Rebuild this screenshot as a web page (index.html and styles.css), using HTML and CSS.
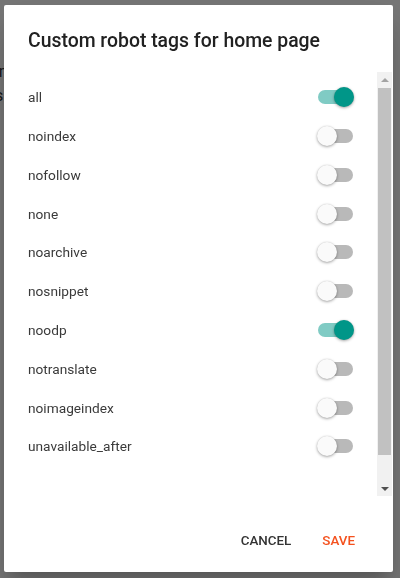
FILE: index.html
```html
<!DOCTYPE html>
<html lang="en">
<head>
<meta charset="utf-8">
<title>Custom robot tags</title>
<link rel="stylesheet" href="styles.css">
</head>
<body>
<div class="page">
  <p class="page-line line-1">Enable custom robots header tags: on</p>
  <p class="page-line line-2">Custom robots header tags for pages</p>
</div>
<div class="overlay">
  <div class="dialog">
    <h2 class="dialog-title">Custom robot tags for home page</h2>
    <div class="dialog-body">
      <ul class="tag-list">
        <li class="tag-row"><span class="tag-label">all</span><span class="switch on"><span class="switch-track"></span><span class="switch-thumb"></span></span></li>
        <li class="tag-row"><span class="tag-label">noindex</span><span class="switch"><span class="switch-track"></span><span class="switch-thumb"></span></span></li>
        <li class="tag-row"><span class="tag-label">nofollow</span><span class="switch"><span class="switch-track"></span><span class="switch-thumb"></span></span></li>
        <li class="tag-row"><span class="tag-label">none</span><span class="switch"><span class="switch-track"></span><span class="switch-thumb"></span></span></li>
        <li class="tag-row"><span class="tag-label">noarchive</span><span class="switch"><span class="switch-track"></span><span class="switch-thumb"></span></span></li>
        <li class="tag-row"><span class="tag-label">nosnippet</span><span class="switch"><span class="switch-track"></span><span class="switch-thumb"></span></span></li>
        <li class="tag-row"><span class="tag-label">noodp</span><span class="switch on"><span class="switch-track"></span><span class="switch-thumb"></span></span></li>
        <li class="tag-row"><span class="tag-label">notranslate</span><span class="switch"><span class="switch-track"></span><span class="switch-thumb"></span></span></li>
        <li class="tag-row"><span class="tag-label">noimageindex</span><span class="switch"><span class="switch-track"></span><span class="switch-thumb"></span></span></li>
        <li class="tag-row"><span class="tag-label">unavailable_after</span><span class="switch"><span class="switch-track"></span><span class="switch-thumb"></span></span></li>
      </ul>
      <div class="scrollbar" aria-hidden="true">
        <span class="sb-btn sb-up"></span>
        <span class="sb-thumb"></span>
        <span class="sb-rest"></span>
        <span class="sb-btn sb-down"></span>
      </div>
    </div>
    <div class="dialog-actions">
      <button class="btn btn-cancel" type="button">Cancel</button>
      <button class="btn btn-save" type="button">Save</button>
    </div>
  </div>
</div>
</body>
</html>
```

FILE: styles.css
```css
html, body {
  margin: 0;
  padding: 0;
  width: 400px;
  height: 578px;
  overflow: hidden;
  background: #ffffff;
  font-family: Roboto, "Liberation Sans", Arial, sans-serif;
}

.page {
  padding-top: 62px;
}

.page-line {
  margin: 0 0 4px -262px;
  width: 265px;
  text-align: right;
  white-space: nowrap;
  font-size: 16px;
  line-height: 20px;
  color: #333;
}

.overlay {
  position: fixed;
  inset: 0;
  background: rgba(0, 0, 0, 0.54);
  display: flex;
  padding: 5px 7px 6px 4px;
}

.dialog {
  flex: 1;
  display: flex;
  flex-direction: column;
  background: #ffffff;
  border-radius: 2px;
  box-shadow: 0 11px 15px -7px rgba(0,0,0,.2), 0 24px 38px 3px rgba(0,0,0,.14);
  overflow: hidden;
}

.dialog-title {
  margin: 0;
  padding: 24px 24px 19px;
  font-size: 19.4px;
  line-height: 24px;
  font-weight: 500;
  color: #212121;
}

.dialog-body {
  display: flex;
  height: 424px;
}

.tag-list {
  flex: 1;
  list-style: none;
  margin: 0;
  padding: 5.8px 23px 0 24px;
  overflow: hidden;
}

.tag-row {
  display: flex;
  align-items: center;
  justify-content: space-between;
  height: 38.8px;
}

.tag-label {
  font-size: 13.7px;
  color: #3a3a3a;
}

.switch {
  position: relative;
  width: 37px;
  height: 20px;
  flex: none;
}

.switch-track {
  position: absolute;
  left: 1px;
  top: 3px;
  width: 35px;
  height: 14px;
  border-radius: 7px;
  background: #b9b9b9;
}

.switch-thumb {
  position: absolute;
  left: 0;
  top: 0;
  width: 20px;
  height: 20px;
  border-radius: 50%;
  background: #fafafa;
  box-shadow: 0 1px 3px rgba(0,0,0,.35), 0 0 1px rgba(0,0,0,.15);
}

.switch.on .switch-track {
  background: #80cbc4;
}

.switch.on .switch-thumb {
  left: 17px;
  background: #009688;
}

.scrollbar {
  width: 15px;
  margin-right: 1px;
  display: flex;
  flex-direction: column;
  background: #f1f1f1;
}

.sb-btn {
  height: 15px;
  flex: none;
  display: flex;
  align-items: center;
  justify-content: center;
}

.sb-btn::before {
  content: "";
  width: 0;
  height: 0;
  border-left: 4px solid transparent;
  border-right: 4px solid transparent;
}

.sb-up::before {
  border-bottom: 4px solid #a3a3a3;
}

.sb-down::before {
  border-top: 4px solid #505050;
}

.sb-thumb {
  height: 367px;
  margin: 1px 1px 0;
  background: #c1c1c1;
}

.sb-rest {
  flex: 1;
}

.dialog-actions {
  display: flex;
  justify-content: flex-end;
  gap: 15px;
  padding: 26px 30px 14px;
}

.btn {
  height: 36px;
  padding: 0 8px;
  border: 0;
  background: transparent;
  font-family: Roboto, "Liberation Sans", Arial, sans-serif;
  font-size: 13.4px;
  font-weight: 500;
  text-transform: uppercase;
  cursor: pointer;
}

.btn-cancel {
  color: #333333;
}

.btn-save {
  color: #f4511e;
}
```
